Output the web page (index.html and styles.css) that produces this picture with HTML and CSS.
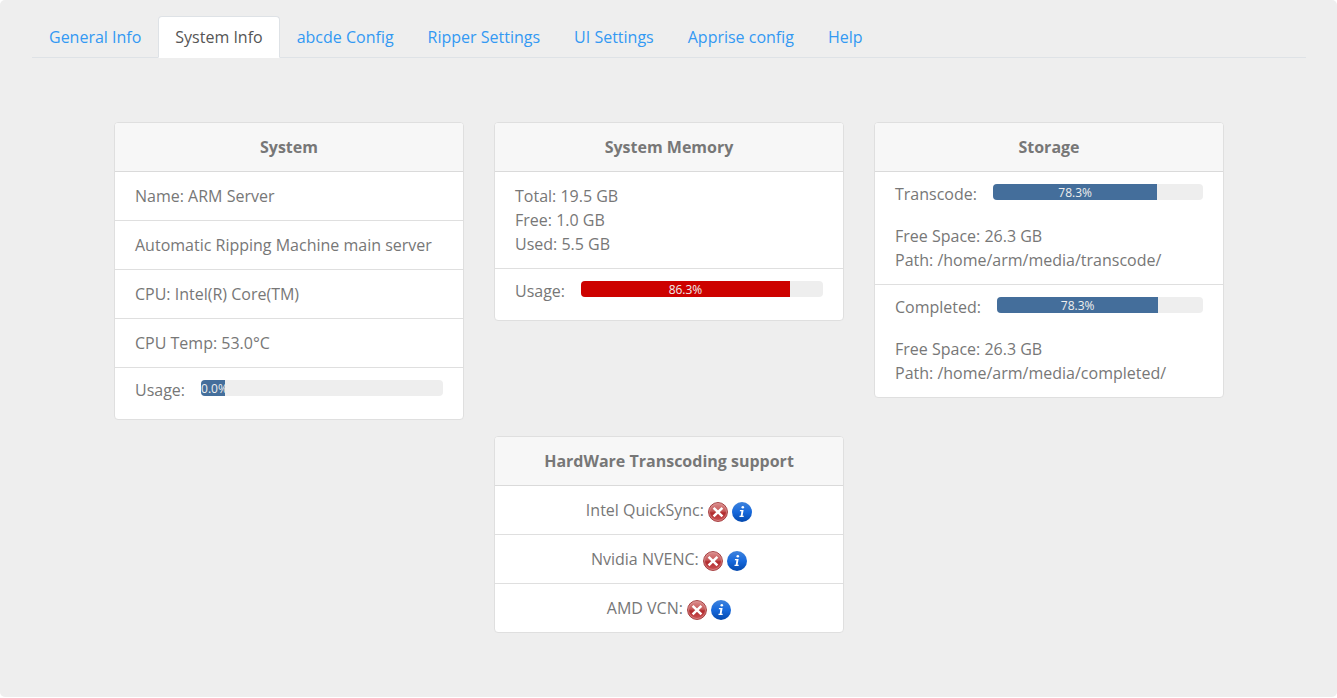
FILE: index.html
```html
<!DOCTYPE html>
<html lang="en">
<head>
<meta charset="utf-8">
<title>System Info</title>
<link rel="stylesheet" href="styles.css">
</head>
<body>
<svg class="defs" width="0" height="0" aria-hidden="true">
  <defs>
    <linearGradient id="red" x1="0" y1="0" x2="0" y2="1"><stop offset="0" stop-color="#dc8e8e"/><stop offset=".45" stop-color="#c65a5a"/><stop offset=".55" stop-color="#b02a2d"/><stop offset="1" stop-color="#cf5557"/></linearGradient>
    <linearGradient id="blue" x1="0" y1="0" x2="0" y2="1"><stop offset="0" stop-color="#3f83dc"/><stop offset=".5" stop-color="#1769dc"/><stop offset="1" stop-color="#0348ad"/></linearGradient>
    <symbol id="cross" viewBox="0 0 20 20">
      <circle cx="10" cy="10" r="9.4" fill="url(#red)" stroke="#a13a3c" stroke-width="1"/>
      <circle cx="10" cy="10" r="8.5" fill="none" stroke="#dda0a0" stroke-width=".6"/>
      <path d="M5.6 5.8l8.8 8.6M14.4 5.8l-8.8 8.6" stroke="#fff" stroke-width="2.5"/>
    </symbol>
    <symbol id="info" viewBox="0 0 20 20">
      <circle cx="10" cy="10" r="10" fill="url(#blue)"/>
      <circle cx="10.8" cy="5.2" r="1.3" fill="#fff"/>
      <path d="M8 8h3.6l-1 5.7h1.2l-.2 1.2H7.4l.2-1.2h1.1l.7-4.5H7.8z" fill="#fff"/>
    </symbol>
  </defs>
</svg>
<main class="panel">
  <nav class="tabs">
    <a class="tab">General Info</a>
    <a class="tab active">System Info</a>
    <a class="tab">abcde Config</a>
    <a class="tab">Ripper Settings</a>
    <a class="tab">UI Settings</a>
    <a class="tab">Apprise config</a>
    <a class="tab">Help</a>
  </nav>
  <div class="cards">
    <section class="card">
      <h2 class="title">System</h2>
      <div class="item">Name: ARM Server</div>
      <div class="item">Automatic Ripping Machine main server</div>
      <div class="item">CPU: Intel(R) Core(TM)</div>
      <div class="item">CPU Temp: 53.0°C</div>
      <div class="item"><div class="meter"><span class="label">Usage:</span><div class="track"><div class="fill" style="width:10%">0.0%</div></div></div></div>
    </section>
    <section class="card">
      <h2 class="title">System Memory</h2>
      <div class="item">Total: 19.5 GB<br>Free: 1.0 GB<br>Used: 5.5 GB</div>
      <div class="item"><div class="meter"><span class="label">Usage:</span><div class="track"><div class="fill danger" style="width:86.3%">86.3%</div></div></div></div>
    </section>
    <section class="card">
      <h2 class="title">Storage</h2>
      <div class="item"><div class="meter tall"><span class="label">Transcode:</span><div class="track"><div class="fill" style="width:78.3%">78.3%</div></div></div>Free Space: 26.3 GB<br>Path: /home/arm/media/transcode/</div>
      <div class="item"><div class="meter tall"><span class="label">Completed:</span><div class="track"><div class="fill" style="width:78.3%">78.3%</div></div></div>Free Space: 26.3 GB<br>Path: /home/arm/media/completed/</div>
    </section>
    <section class="card hardware">
      <h2 class="title">HardWare Transcoding support</h2>
      <div class="item support">Intel QuickSync: <svg class="icon"><use href="#cross"/></svg> <svg class="icon"><use href="#info"/></svg></div>
      <div class="item support">Nvidia NVENC: <svg class="icon"><use href="#cross"/></svg> <svg class="icon"><use href="#info"/></svg></div>
      <div class="item support">AMD VCN: <svg class="icon"><use href="#cross"/></svg> <svg class="icon"><use href="#info"/></svg></div>
    </section>
  </div>
</main>
</body>
</html>
```
FILE: styles.css
```css
* { box-sizing: border-box; }
body { margin: 0; background: #fff; color: #777; font: 16px/24px "Open Sans", "Noto Sans", sans-serif; }
.defs { display: block; }
.panel { height: 697px; padding: 16px 31px 16px 32px; background: #eee; border-radius: 5px; }
.tabs { display: flex; height: 42px; border-bottom: 1px solid #dee2e6; }
.tab { height: 42px; padding: 8px 16px; border: 1px solid transparent; border-radius: 4px 4px 0 0; color: #3399f3; white-space: nowrap; }
.tab.active { background: #fff; color: #555; border-color: #dee2e6 #dee2e6 #fff; }
.cards { display: grid; grid-template-columns: repeat(3, 350px); column-gap: 30px; row-gap: 16px; align-items: start; padding: 64px 0 0 82px; }
.card { background: #fff; border: 1px solid #dfdfdf; border-radius: 4px; overflow: hidden; }
.hardware { grid-column: 2; }
.title { margin: 0; padding: 12px 20px; background: #f7f7f7; border-bottom: 1px solid #dadada; font-size: 16px; font-weight: 700; line-height: 24px; text-align: center; }
.item { padding: 12px 20px; }
.item + .item { border-top: 1px solid #dfdfdf; }
.meter { display: flex; gap: 16px; height: 27px; }
.meter.tall { height: 40px; }
.label { margin-top: -2px; }
.track { flex: 1; height: 16px; background: #eee; border-radius: 4px; overflow: hidden; }
.fill { height: 16px; background: #446e9b; color: #eee; font-size: 12px; line-height: 18px; text-align: center; overflow: hidden; white-space: nowrap; }
.fill.danger { background: #cd0200; }
.support { height: 48px; text-align: center; }
.item + .support { height: 49px; }
.icon { width: 20px; height: 20px; vertical-align: -6px; }
```
